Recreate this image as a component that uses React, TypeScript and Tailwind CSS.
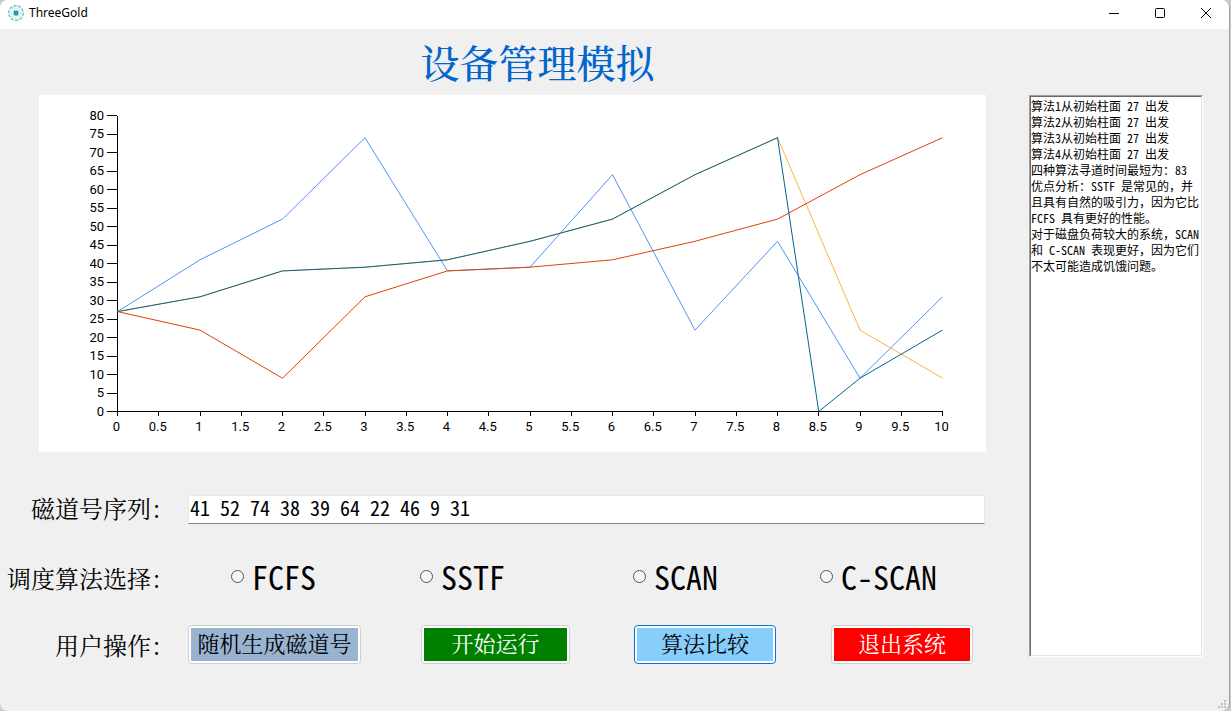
import React from "react";

const FONT = "font-['Noto_Sans_Mono_CJK_SC','Noto_Sans_CJK_SC','Liberation_Mono',monospace]";
const SONG = "font-['Noto_Serif_CJK_SC','Noto_Sans_CJK_SC',serif]";

const LOG = [
  "算法1从初始柱面 27 出发",
  "算法2从初始柱面 27 出发",
  "算法3从初始柱面 27 出发",
  "算法4从初始柱面 27 出发",
  "四种算法寻道时间最短为：83",
  "优点分析：SSTF 是常见的，并",
  "且具有自然的吸引力，因为它比",
  "FCFS 具有更好的性能。",
  "对于磁盘负荷较大的系统，SCAN",
  "和 C-SCAN 表现更好，因为它们",
  "不太可能造成饥饿问题。",
].join("\n");

type Point = [number, number];

const SERIES: { name: string; color: string; points: Point[] }[] = [
  {
    name: "FCFS",
    color: "#4f95f2",
    points: [[0, 27], [1, 41], [2, 52], [3, 74], [4, 38], [5, 39], [6, 64], [7, 22], [8, 46], [9, 9], [10, 31]],
  },
  {
    name: "SCAN",
    color: "#fcb441",
    points: [[0, 27], [1, 31], [2, 38], [3, 39], [4, 41], [5, 46], [6, 52], [7, 64], [8, 74], [9, 22], [10, 9]],
  },
  {
    name: "SSTF",
    color: "#e0400a",
    points: [[0, 27], [1, 22], [2, 9], [3, 31], [4, 38], [5, 39], [6, 41], [7, 46], [8, 52], [9, 64], [10, 74]],
  },
  {
    name: "C-SCAN",
    color: "#056492",
    points: [[0, 27], [1, 31], [2, 38], [3, 39], [4, 41], [5, 46], [6, 52], [7, 64], [8, 74], [8.5, 0], [9, 9], [10, 22]],
  },
];

const px = (x: number) => 78.5 + x * 82.5;
const py = (y: number) => 316.5 - y * 3.7;

const Y_TICKS = Array.from({ length: 17 }, (_, i) => i * 5);
const X_TICKS = Array.from({ length: 21 }, (_, i) => i / 2);

function Chart() {
  return (
    <svg viewBox="0 0 947 357" className="block h-auto w-full bg-white" role="img" aria-label="磁道">
      <g stroke="#000" strokeWidth="1" shapeRendering="crispEdges">
        <line x1={px(0)} y1={py(80)} x2={px(0)} y2={py(0)} />
        <line x1={px(0)} y1={py(0)} x2={px(10) + 0.5} y2={py(0)} />
        {Y_TICKS.map((t) => (
          <line key={t} x1="68" x2="78" y1={py(t)} y2={py(t)} />
        ))}
        {X_TICKS.map((t) => (
          <line key={t} x1={px(t)} x2={px(t)} y1="317" y2="321" />
        ))}
      </g>
      <g className="font-['Roboto',sans-serif] text-[13px]" fill="#000">
        {Y_TICKS.map((t) => (
          <text key={t} x="65" y={py(t) + 4} textAnchor="end">{t}</text>
        ))}
        {X_TICKS.map((t) => (
          <text key={t} x={px(t) - 1} y="336" textAnchor="middle">{t}</text>
        ))}
      </g>
      {SERIES.map((s) => (
        <polyline
          key={s.name}
          fill="none"
          stroke={s.color}
          strokeWidth="1"
          points={s.points.map(([x, y]) => `${px(x)},${py(y)}`).join(" ")}
        />
      ))}
    </svg>
  );
}

function AppIcon() {
  return (
    <svg viewBox="0 0 16 16" className="size-4" fill="none" aria-hidden="true">
      <circle cx="8" cy="8" r="7.3" stroke="#5fb4c4" strokeWidth="1.2" strokeDasharray="3.4 1.1" />
      <circle cx="8" cy="8" r="5" stroke="#b4dfe7" strokeWidth="1.4" strokeDasharray="1.6 1" />
      <circle cx="8" cy="8" r="3.2" fill="#8fd0da" />
      <rect x="6" y="6" width="4" height="4" rx="0.8" fill="#2b93a8" />
    </svg>
  );
}

function TitleBar() {
  return (
    <header className="flex h-[29px] items-center bg-white pl-2">
      <div className="flex flex-1 items-center gap-[5px] pb-[3px]">
        <AppIcon />
        <span className="font-['Noto_Sans',sans-serif] text-[12px] leading-4 text-black">ThreeGold</span>
      </div>
      <div className="flex pb-[3px]">
        <button type="button" aria-label="最小化" className="flex h-[26px] w-[46px] items-center justify-center">
          <svg viewBox="0 0 10 10" className="size-[10px]" stroke="#000" shapeRendering="crispEdges"><path d="M0 5.5h10" /></svg>
        </button>
        <button type="button" aria-label="最大化" className="flex h-[26px] w-[46px] items-center justify-center">
          <svg viewBox="0 0 10 10" className="size-[10px]" stroke="#000" fill="none"><rect x=".5" y=".5" width="9" height="9" rx="1" /></svg>
        </button>
        <button type="button" aria-label="关闭" className="flex h-[26px] w-[46px] items-center justify-center">
          <svg viewBox="0 0 10 10" className="size-[10px]" stroke="#000"><path d="M0 0l10 10M10 0L0 10" /></svg>
        </button>
      </div>
    </header>
  );
}

function Radio({ label }: { label: string }) {
  return (
    <label className="flex items-center gap-2 text-[32px] leading-10">
      <input
        type="radio"
        name="algorithm"
        value={label}
        className="size-[13px] shrink-0 appearance-none rounded-full border border-[#555] bg-[#f6f6f6] checked:border-4 checked:border-[#0067c0]"
      />
      {label}
    </label>
  );
}

function ActionButton({ label, width, frame, fill }: { label: string; width: string; frame: string; fill: string }) {
  return (
    <button type="button" className={`h-[39px] rounded-[4px] border bg-white p-[2px] ${width} ${frame}`}>
      <span className={`flex h-full items-center justify-center pb-[3px] text-[22px] leading-[30px] whitespace-nowrap ${SONG} ${fill}`}>{label}</span>
    </button>
  );
}

export default function App() {
  return (
    <div className="flex min-h-screen flex-col bg-[#c4ccd0] pr-px">
      <div className={`relative flex flex-1 flex-col overflow-hidden rounded-lg border-r border-[#a0a0a0] bg-[#f0f0f0] text-black ${FONT}`}>
        <TitleBar />
        <main className="flex flex-1">
          <div className="flex min-w-0 flex-1 flex-col">
            <h1 className={`h-[66px] pt-1 pl-[46px] text-center text-[39px] leading-[56px] font-medium text-[#0066cc] ${SONG}`}>设备管理模拟</h1>
            <div className="pr-[43px] pl-[39px]">
              <Chart />
            </div>
            <form className="flex flex-col pt-[43px] pr-11" onSubmit={(e) => e.preventDefault()}>
              <div className="flex items-center">
                <label htmlFor="tracks" className={`w-[175px] pb-1 text-right text-[24px] leading-[25px] ${SONG}`}>磁道号序列：</label>
                <input
                  id="tracks"
                  type="text"
                  defaultValue="41 52 74 38 39 64 22 46 9 31"
                  className="ml-[13px] h-[29px] min-w-0 flex-1 border border-[#e8e8e8] border-b-[#858585] bg-white px-px pb-1 text-[20px] leading-6 outline-none"
                />
              </div>
              <fieldset className="mt-8 flex items-center">
                <span className={`w-[175px] text-right text-[24px] leading-10 ${SONG}`}>调度算法选择：</span>
                <div className="ml-[56px] grid flex-1 grid-cols-[189fr_213fr_187fr_165fr] pb-1">
                  <Radio label="FCFS" />
                  <Radio label="SSTF" />
                  <Radio label="SCAN" />
                  <Radio label="C-SCAN" />
                </div>
              </fieldset>
              <div className="mt-[25px] flex items-center">
                <span className={`w-[175px] text-right text-[24px] leading-[38px] ${SONG}`}>用户操作：</span>
                <div className="ml-[13px] grid flex-1 grid-cols-[233fr_213fr_197fr_154fr]">
                  <ActionButton label="随机生成磁道号" width="w-[173px]" frame="border-[#d0d0d0]" fill="bg-[#99b4d1]" />
                  <ActionButton label="开始运行" width="w-[149px]" frame="border-[#d0d0d0]" fill="bg-[#008000] text-white" />
                  <ActionButton label="算法比较" width="w-[142px]" frame="border-[#0078d4]" fill="bg-[#87cefa]" />
                  <ActionButton label="退出系统" width="w-[142px]" frame="border-[#d0d0d0]" fill="bg-[#ff0000] text-white" />
                </div>
              </div>
            </form>
          </div>
          <aside className="flex w-[200px] shrink-0 flex-col pt-[66px] pr-[26px] pb-[54px]">
            <div className="flex flex-1 border border-t-[#a0a0a0] border-r-white border-b-white border-l-[#a0a0a0]">
              <textarea
                readOnly
                aria-label="运行结果"
                value={LOG}
                className="min-w-0 flex-1 resize-none overflow-hidden border border-t-[#696969] border-r-[#e3e3e3] border-b-[#e3e3e3] border-l-[#696969] bg-white pt-px text-[12px] leading-4 whitespace-pre outline-none"
              />
            </div>
          </aside>
        </main>
        <svg viewBox="0 0 10 10" className="absolute right-[2px] bottom-[2px] size-[10px]" fill="#bfbfbf" aria-hidden="true">
          <path d="M7 1h2v2h-2zM4 4h2v2h-2zM7 4h2v2h-2zM1 7h2v2h-2zM4 7h2v2h-2zM7 7h2v2h-2z" />
        </svg>
      </div>
    </div>
  );
}
